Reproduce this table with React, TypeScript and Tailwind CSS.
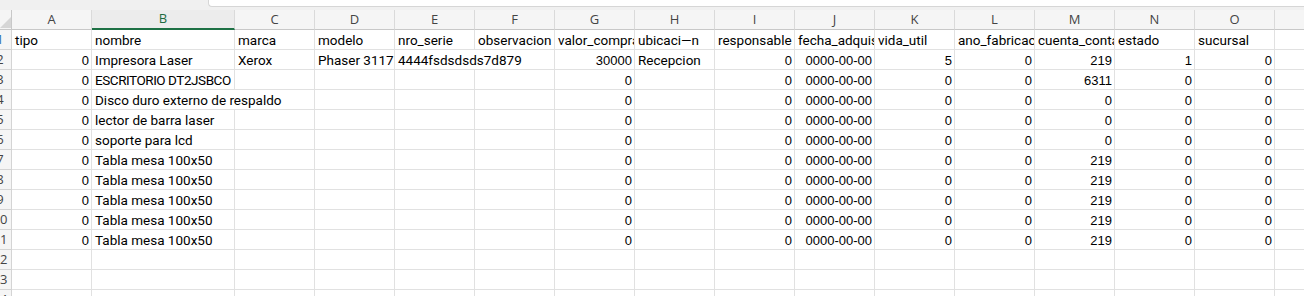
import React from "react";

type Cell = { v?: string; num?: boolean; span?: number; tight?: boolean };

const COLS = ["A", "B", "C", "D", "E", "F", "G", "H", "I", "J", "K", "L", "M", "N", "O"];
const W: Record<string, number> = {};
COLS.forEach((c) => (W[c] = c === "B" ? 143 : 80));

const widthClass: Record<number, string> = {
  80: "w-[80px]",
  143: "w-[143px]",
  160: "w-[160px]",
  223: "w-[223px]",
};

const headers = [
  "tipo",
  "nombre",
  "marca",
  "modelo",
  "nro_serie",
  "observacion",
  "valor_compra",
  "ubicaci\u2014n",
  "responsable",
  "fecha_adquisicion",
  "vida_util",
  "ano_fabricacion",
  "cuenta_contable",
  "estado",
  "sucursal",
];

function dataRow(
  b: string,
  opts: {
    c?: string;
    d?: string;
    e?: string;
    g?: string;
    h?: string;
    k?: string;
    m?: string;
    n?: string;
    spanB?: boolean;
    spanE?: boolean;
    tightB?: boolean;
  }
): Cell[] {
  const row: Cell[] = [];
  row.push({ v: "0", num: true });
  if (opts.spanB) {
    row.push({ v: b, span: 2 });
  } else {
    row.push({ v: b, tight: opts.tightB });
    row.push({ v: opts.c });
  }
  row.push({ v: opts.d });
  if (opts.spanE) {
    row.push({ v: opts.e, span: 2 });
  } else {
    row.push({ v: opts.e });
    row.push({});
  }
  row.push({ v: opts.g ?? "0", num: true });
  row.push({ v: opts.h });
  row.push({ v: "0", num: true });
  row.push({ v: "0000-00-00", num: true });
  row.push({ v: opts.k ?? "0", num: true });
  row.push({ v: "0", num: true });
  row.push({ v: opts.m ?? "0", num: true });
  row.push({ v: opts.n ?? "0", num: true });
  row.push({ v: "0", num: true });
  return row;
}

const rows: Cell[][] = [
  headers.map((h) => ({ v: h })),
  dataRow("Impresora Laser", {
    c: "Xerox",
    d: "Phaser 3117",
    e: "4444fsdsdsds7d879",
    spanE: true,
    g: "30000",
    h: "Recepcion",
    k: "5",
    m: "219",
    n: "1",
  }),
  dataRow("ESCRITORIO DT2JSBCO", { m: "6311", tightB: true }),
  dataRow("Disco duro externo de respaldo", { spanB: true }),
  dataRow("lector de barra laser", {}),
  dataRow("soporte para lcd", {}),
  dataRow("Tabla mesa 100x50", { m: "219" }),
  dataRow("Tabla mesa 100x50", { m: "219" }),
  dataRow("Tabla mesa 100x50", { m: "219" }),
  dataRow("Tabla mesa 100x50", { m: "219" }),
  dataRow("Tabla mesa 100x50", { m: "219" }),
  COLS.map(() => ({})),
  COLS.map(() => ({})),
  COLS.map(() => ({})),
];

function RowHeader({ n, active }: { n: number; active?: boolean }) {
  return (
    <div className="w-[12px] h-[20px] shrink-0 overflow-hidden bg-[#f5f5f5] border-r border-b border-[#d4d4d4]">
      <div
        className={`w-[24px] -ml-[12px] h-full flex items-center justify-center text-[13px] ${
          active ? "text-[#2a6fb0]" : "text-[#444]"
        }`}
        style={{ fontFamily: '"Open Sans", "Noto Sans", sans-serif' }}
      >
        {n}
      </div>
    </div>
  );
}

function GridRow({ cells, idx }: { cells: Cell[]; idx: number }) {
  let colIndex = 0;
  return (
    <div className="flex h-[20px]">
      <RowHeader n={idx + 1} active={idx === 0} />
      {cells.map((c, i) => {
        const span = c.span ?? 1;
        let w = 0;
        for (let s = 0; s < span; s++) w += W[COLS[colIndex + s]];
        colIndex += span;
        return (
          <div
            key={i}
            className={`${widthClass[w]} h-[20px] shrink-0 overflow-hidden whitespace-nowrap border-r border-b border-[#e1e1e1] flex items-end pb-[1px] text-black ${
              c.num
                ? "justify-end pr-[2px] text-[13px] leading-[14px]"
                : "pl-[3px] text-[13.5px] leading-[16px]"
            } ${c.tight ? "tracking-[-0.45px]" : ""}`}
            style={{
              fontFamily: c.num
                ? '"Liberation Sans", Arial, sans-serif'
                : 'Roboto, "Noto Sans", sans-serif',
            }}
          >
            {c.v}
          </div>
        );
      })}
      <div className="flex-1 h-[20px] border-b border-[#e1e1e1]" />
    </div>
  );
}

export default function App() {
  return (
    <div className="w-[1304px] h-[296px] overflow-hidden bg-white">
      {/* top band with formula bar edge */}
      <div className="h-[10px] bg-[#f0f0f0] flex">
        <div className="w-[208px] shrink-0" />
        <div className="flex-1 h-[7px] bg-white border-l border-b border-[#d6d6d6] rounded-bl-[4px]" />
      </div>
      {/* column headers */}
      <div
        className="flex h-[20px] bg-[#f5f5f5] text-[13px] text-[#444]"
        style={{ fontFamily: '"Open Sans", "Noto Sans", sans-serif' }}
      >
        <div className="w-[12px] h-[20px] shrink-0 border-r border-b border-[#c8c8c8] flex items-end justify-end">
          <svg width="11" height="11" viewBox="0 0 11 11" className="mb-[1px]">
            <polygon points="11,0 11,11 0,11" fill="#d6d6d6" />
          </svg>
        </div>
        {COLS.map((c) => (
          <div
            key={c}
            className={`${widthClass[W[c]]} h-[20px] shrink-0 flex items-center justify-center border-r border-[#dadada] ${
              c === "B"
                ? "border-b-2 border-b-[#1e7145] text-[#1e6b41] bg-[#ececec]"
                : "border-b border-b-[#c8c8c8]"
            }`}
          >
            {c}
          </div>
        ))}
        <div className="flex-1 h-[20px] border-b border-[#c8c8c8]" />
      </div>
      {rows.map((r, i) => (
        <GridRow key={i} cells={r} idx={i} />
      ))}
    </div>
  );
}
